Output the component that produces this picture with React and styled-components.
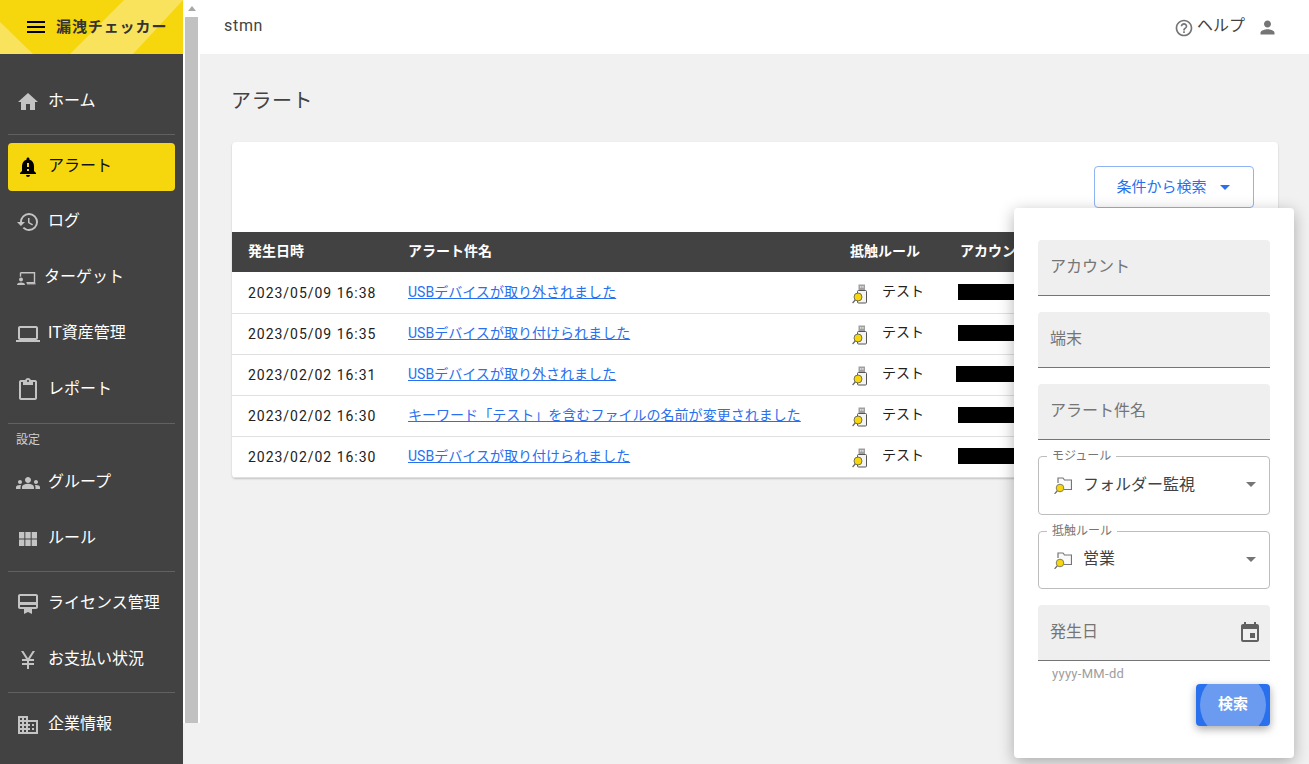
import React from "react";
import styled, { createGlobalStyle } from "styled-components";
import {
  MdMenu, MdHome, MdNotificationImportant, MdHistory, MdLaptop, MdOutlineContentPaste,
  MdGroups, MdViewModule, MdCardMembership, MdCurrencyYen, MdOutlineDomain,
  MdHelpOutline, MdPerson, MdArrowDropDown, MdEvent,
} from "react-icons/md";

const Global = createGlobalStyle`
  html, body { margin: 0; padding: 0; height: 100%; overflow: hidden; }
  body { font-family: Roboto, "Noto Sans CJK JP", sans-serif; background: #f1f1f1; }
  * { box-sizing: border-box; }
`;

const NAV_TOP = [
  { label: "アラート", icon: MdNotificationImportant, active: true },
  { label: "ログ", icon: MdHistory },
  { label: "ターゲット", icon: TargetIcon },
  { label: "IT資産管理", icon: MdLaptop },
  { label: "レポート", icon: MdOutlineContentPaste },
];

const ROWS = [
  { date: "2023/05/09 16:38", title: "USBデバイスが取り外されました" },
  { date: "2023/05/09 16:35", title: "USBデバイスが取り付けられました" },
  { date: "2023/02/02 16:31", title: "USBデバイスが取り外されました", shift: true },
  { date: "2023/02/02 16:30", title: "キーワード「テスト」を含むファイルの名前が変更されました" },
  { date: "2023/02/02 16:30", title: "USBデバイスが取り付けられました" },
];

const Page = styled.div`
  display: flex;
  width: 1309px;
  height: 764px;
  overflow: hidden;
  position: relative;
`;

const Sidebar = styled.aside`
  width: 183px;
  height: 764px;
  flex-shrink: 0;
  background: #424242;
  color: #fff;
`;

const Logo = styled.div`
  height: 54px;
  position: relative;
  overflow: hidden;
  background: #f6d70d;
  display: flex;
  align-items: center;
  padding-left: 24px;
  gap: 8px;
  color: #333;
  &::before, &::after {
    content: "";
    position: absolute;
    inset: 0;
    background: #f9e25c;
  }
  &::before { clip-path: polygon(0 22px, 33px 54px, 0 54px); }
  &::after { clip-path: polygon(70px 54px, 124px 0, 183px 0, 133px 54px); }
  & > * { position: relative; z-index: 1; }
`;

const LogoText = styled.span`
  font-size: 15px;
  font-weight: 700;
  letter-spacing: 0.9px;
  white-space: nowrap;
  margin-bottom: 3px;
`;

const Nav = styled.nav`
  padding: 20px 8px 0;
`;

const Item = styled.div`
  height: ${p => (p.active ? "48px" : "56px")};
  margin-bottom: ${p => (p.active ? "3px" : "0")};
  padding-left: 8px;
  display: flex;
  align-items: center;
  gap: 8px;
  border-radius: 4px;
  background: ${p => (p.active ? "#f6d70d" : "transparent")};
  color: ${p => (p.active ? "#111" : "#fff")};
  font-size: 16px;
  white-space: nowrap;
  svg { flex-shrink: 0; color: ${p => (p.active ? "#000" : "#c4c4c4")}; }
`;

const ItemText = styled.span`
  margin-bottom: 6px;
`;

const Rule = styled.div`
  height: 1px;
  background: #616161;
  margin: ${p => p.$m};
`;

const NavLabel = styled.div`
  font-size: 12px;
  color: #d0d0d0;
  padding-left: 8px;
  height: 27px;
  line-height: 24px;
`;

const ScrollTrack = styled.div`
  width: 17px;
  height: 723px;
  flex-shrink: 0;
  background: #fff;
  padding: 17px 2px 0;
  position: relative;
  &::before {
    content: "";
    position: absolute;
    top: 6px;
    left: 5px;
    border: 4px solid transparent;
    border-top: 0;
    border-bottom: 5px solid #a8a8a8;
  }
`;

const ScrollThumb = styled.div`
  height: 100%;
  background: #c1c1c1;
`;

const Column = styled.div`
  flex: 1;
  min-width: 0;
  display: flex;
  flex-direction: column;
`;

const Header = styled.header`
  height: 54px;
  background: #fff;
  display: flex;
  align-items: center;
  padding: 0 31px 4px 24px;
  font-size: 16px;
  color: #424242;
`;

const Account = styled.span`
  letter-spacing: 0.7px;
`;

const Spacer = styled.div`
  flex: 1;
`;

const Help = styled.div`
  display: flex;
  align-items: center;
  gap: 3px;
  margin-right: 12px;
  color: #424242;
  svg { color: #757575; margin-top: 5px; }
  span { margin-bottom: 2px; }
`;

const User = styled(MdPerson)`
  color: #757575;
  margin-top: 4px;
`;

const Main = styled.main`
  flex: 1;
  background: #f1f1f1;
  padding: 33px 31px 0 32px;
`;

const Title = styled.h1`
  margin: 0 0 27px -1px;
  font-size: 20px;
  font-weight: 400;
  line-height: 28px;
  letter-spacing: 0.5px;
  color: #424242;
`;

const Card = styled.section`
  background: #fff;
  border-radius: 4px;
  box-shadow: 0 1px 2px rgba(0, 0, 0, 0.2);
  overflow: hidden;
`;

const CardTop = styled.div`
  height: 90px;
  padding: 24px 24px 0 0;
  display: flex;
  justify-content: flex-end;
`;

const SearchToggle = styled.button`
  width: 160px;
  height: 42px;
  padding: 0 0 0 5px;
  display: flex;
  align-items: center;
  justify-content: center;
  gap: 6px;
  background: #fff;
  border: 1px solid #8fb3f3;
  border-radius: 4px;
  color: #2970ee;
  font: inherit;
  font-size: 15px;
  svg { color: #2970ee; }
  span { margin-bottom: 4px; }
`;

const Rows = styled.div`
  padding-top: 1px;
`;

const TableRow = styled.div`
  display: grid;
  grid-template-columns: 160px 442px 110px 1fr;
  align-items: center;
  padding-left: 16px;
  font-size: 14px;
  color: #212121;
  height: 41px;
  border-bottom: 1px solid #e0e0e0;
`;

const HeadRow = styled(TableRow)`
  height: 40px;
  padding-bottom: 4px;
  background: #424242;
  border-bottom: 0;
  color: #fff;
  font-weight: 700;
  font-size: 14px;
  white-space: nowrap;
`;

const DateCell = styled.div`
  letter-spacing: 0.97px;
  margin-top: -1px;
`;

const TitleCell = styled.div`
  margin-top: -4px;
`;

const TitleLink = styled.a`
  color: #2970ee;
  text-decoration: underline;
  white-space: nowrap;
  letter-spacing: 0.03px;
`;

const RuleCell = styled.div`
  display: flex;
  align-items: center;
  gap: 14px;
  padding-left: 2px;
  svg { margin-top: 1px; }
  span { margin-top: -7px; }
`;

const Redact = styled.div`
  width: 100px;
  height: 16px;
  background: #000;
  margin: -3px 0 0 ${p => (p.$shift ? "-4px" : "-2px")};
`;

const Popover = styled.div`
  position: absolute;
  left: 1014px;
  top: 208px;
  width: 280px;
  height: 550px;
  background: #fff;
  border-radius: 4px;
  box-shadow: 0 4px 16px rgba(0, 0, 0, 0.3);
  padding: 32px 24px 0;
  display: flex;
  flex-direction: column;
`;

const Filled = styled.div`
  height: 56px;
  margin-bottom: 16px;
  background: #efefef;
  border-radius: 4px 4px 0 0;
  border-bottom: 1px solid #757575;
  padding: 0 8px 6px 12px;
  display: flex;
  align-items: center;
  justify-content: space-between;
  font-size: 16px;
  color: #757575;
  svg { color: #616161; margin-top: 6px; }
`;

const Outlined = styled.div`
  position: relative;
  height: ${p => p.$h}px;
  margin-bottom: 16px;
  border: 1px solid #bdbdbd;
  border-radius: 4px;
  padding: 0 6px 0 15px;
  display: flex;
  align-items: center;
  gap: 11px;
  font-size: 16px;
  color: #424242;
  svg:last-child { margin: 0 0 3px auto; color: #757575; }
`;

const Value = styled.span`
  margin-bottom: 6px;
`;

const Legend = styled.span`
  position: absolute;
  left: 8px;
  top: -8px;
  padding: 0 5px;
  background: #fff;
  font-size: 12px;
  line-height: 14px;
  color: #757575;
`;

const Hint = styled.div`
  margin: -15px 0 0 14px;
  height: 22px;
  font-size: 13px;
  letter-spacing: 0.3px;
  line-height: 23px;
  color: #9e9e9e;
`;

const Submit = styled.button`
  position: relative;
  overflow: hidden;
  align-self: flex-end;
  width: 74px;
  height: 42px;
  padding: 0 0 5px;
  border: 0;
  border-radius: 4px;
  background: #2970ee;
  color: #fff;
  font: inherit;
  font-size: 15px;
  font-weight: 700;
  box-shadow: 0 3px 8px rgba(0, 0, 0, 0.35);
  &::before {
    content: "";
    position: absolute;
    left: 4px;
    top: -12px;
    width: 66px;
    height: 66px;
    border-radius: 50%;
    background: #6b9bf1;
  }
  span { position: relative; }
`;

function TargetIcon() {
  return (
    <svg width="20" height="20" viewBox="0 0 20 20" fill="none">
      <path d="M4.5 4.7h14v10h-8" stroke="#c4c4c4" strokeWidth="1.4" />
      <path d="M4.5 4.7v4" stroke="#c4c4c4" strokeWidth="1.4" />
      <path d="M11 15.2h8.5v1.2H11z" fill="#c4c4c4" />
      <circle cx="5" cy="11.5" r="2" fill="#c4c4c4" />
      <path d="M1 17c0-1.8 2-2.5 4-2.5s4 .7 4 2.5z" fill="#c4c4c4" />
    </svg>
  );
}

function UsbIcon() {
  return (
    <svg width="16" height="20" viewBox="0 0 16 20" fill="none">
      <rect x="6.5" y="0.5" width="6.5" height="6.5" fill="#a0a0a0" />
      <rect x="8" y="2.2" width="1.4" height="1.4" fill="#eee" />
      <rect x="10.2" y="2.2" width="1.4" height="1.4" fill="#eee" />
      <rect x="5.5" y="6.5" width="9" height="12.5" rx="1" fill="#f4f4f4" stroke="#555" />
      <circle cx="6" cy="13" r="4" fill="#f6d70d" stroke="#555" strokeWidth="0.8" />
      <path d="M3.2 16 .6 19" stroke="#666" strokeWidth="1.2" />
    </svg>
  );
}

function FolderIcon() {
  return (
    <svg width="18" height="17" viewBox="0 0 18 17" fill="none">
      <path d="M4 6V1h5l1.5 2h7v9.5H10" stroke="#757575" strokeWidth="1.2" fill="#fafafa" />
      <circle cx="6" cy="11" r="3.8" fill="#f6d70d" stroke="#666" strokeWidth="0.8" />
      <path d="M3.2 14 .6 16.8" stroke="#666" strokeWidth="1.2" />
    </svg>
  );
}

export default function App() {
  return (
    <Page>
      <Global />
      <Sidebar>
        <Logo>
          <MdMenu size={24} color="#000" />
          <LogoText>漏洩チェッカー</LogoText>
        </Logo>
        <Nav>
          <Item><MdHome size={24} /><ItemText>ホーム</ItemText></Item>
          <Rule $m="4px 0 8px" />
          {NAV_TOP.map(n => (
            <Item key={n.label} active={n.active}>
              <n.icon size={24} />
              <ItemText>{n.label}</ItemText>
            </Item>
          ))}
          <Rule $m="5px 0 4px" />
          <NavLabel>設定</NavLabel>
          <Item><MdGroups size={24} /><ItemText>グループ</ItemText></Item>
          <Item><MdViewModule size={24} /><ItemText>ルール</ItemText></Item>
          <Rule $m="4px 0 4px" />
          <Item><MdCardMembership size={24} /><ItemText>ライセンス管理</ItemText></Item>
          <Item><MdCurrencyYen size={24} /><ItemText>お支払い状況</ItemText></Item>
          <Rule $m="4px 0 4px" />
          <Item><MdOutlineDomain size={24} /><ItemText>企業情報</ItemText></Item>
        </Nav>
      </Sidebar>
      <ScrollTrack><ScrollThumb /></ScrollTrack>
      <Column>
        <Header>
          <Account>stmn</Account>
          <Spacer />
          <Help><MdHelpOutline size={20} /><span>ヘルプ</span></Help>
          <User size={21} />
        </Header>
        <Main>
          <Title>アラート</Title>
          <Card>
            <CardTop>
              <SearchToggle><span>条件から検索</span><MdArrowDropDown size={24} /></SearchToggle>
            </CardTop>
            <HeadRow>
              <div>発生日時</div>
              <div>アラート件名</div>
              <div>抵触ルール</div>
              <div>アカウント</div>
            </HeadRow>
            <Rows>
              {ROWS.map((r, i) => (
                <TableRow key={i}>
                  <DateCell>{r.date}</DateCell>
                  <TitleCell><TitleLink>{r.title}</TitleLink></TitleCell>
                  <RuleCell><UsbIcon /><span>テスト</span></RuleCell>
                  <Redact $shift={r.shift} />
                </TableRow>
              ))}
            </Rows>
          </Card>
        </Main>
      </Column>
      <Popover>
        <Filled>アカウント</Filled>
        <Filled>端末</Filled>
        <Filled>アラート件名</Filled>
        <Outlined $h={59}>
          <Legend>モジュール</Legend>
          <FolderIcon />
          <Value>フォルダー監視</Value>
          <MdArrowDropDown size={24} />
        </Outlined>
        <Outlined $h={58}>
          <Legend>抵触ルール</Legend>
          <FolderIcon />
          <Value>営業</Value>
          <MdArrowDropDown size={24} />
        </Outlined>
        <Filled>発生日<MdEvent size={24} /></Filled>
        <Hint>yyyy-MM-dd</Hint>
        <Submit><span>検索</span></Submit>
      </Popover>
    </Page>
  );
}
